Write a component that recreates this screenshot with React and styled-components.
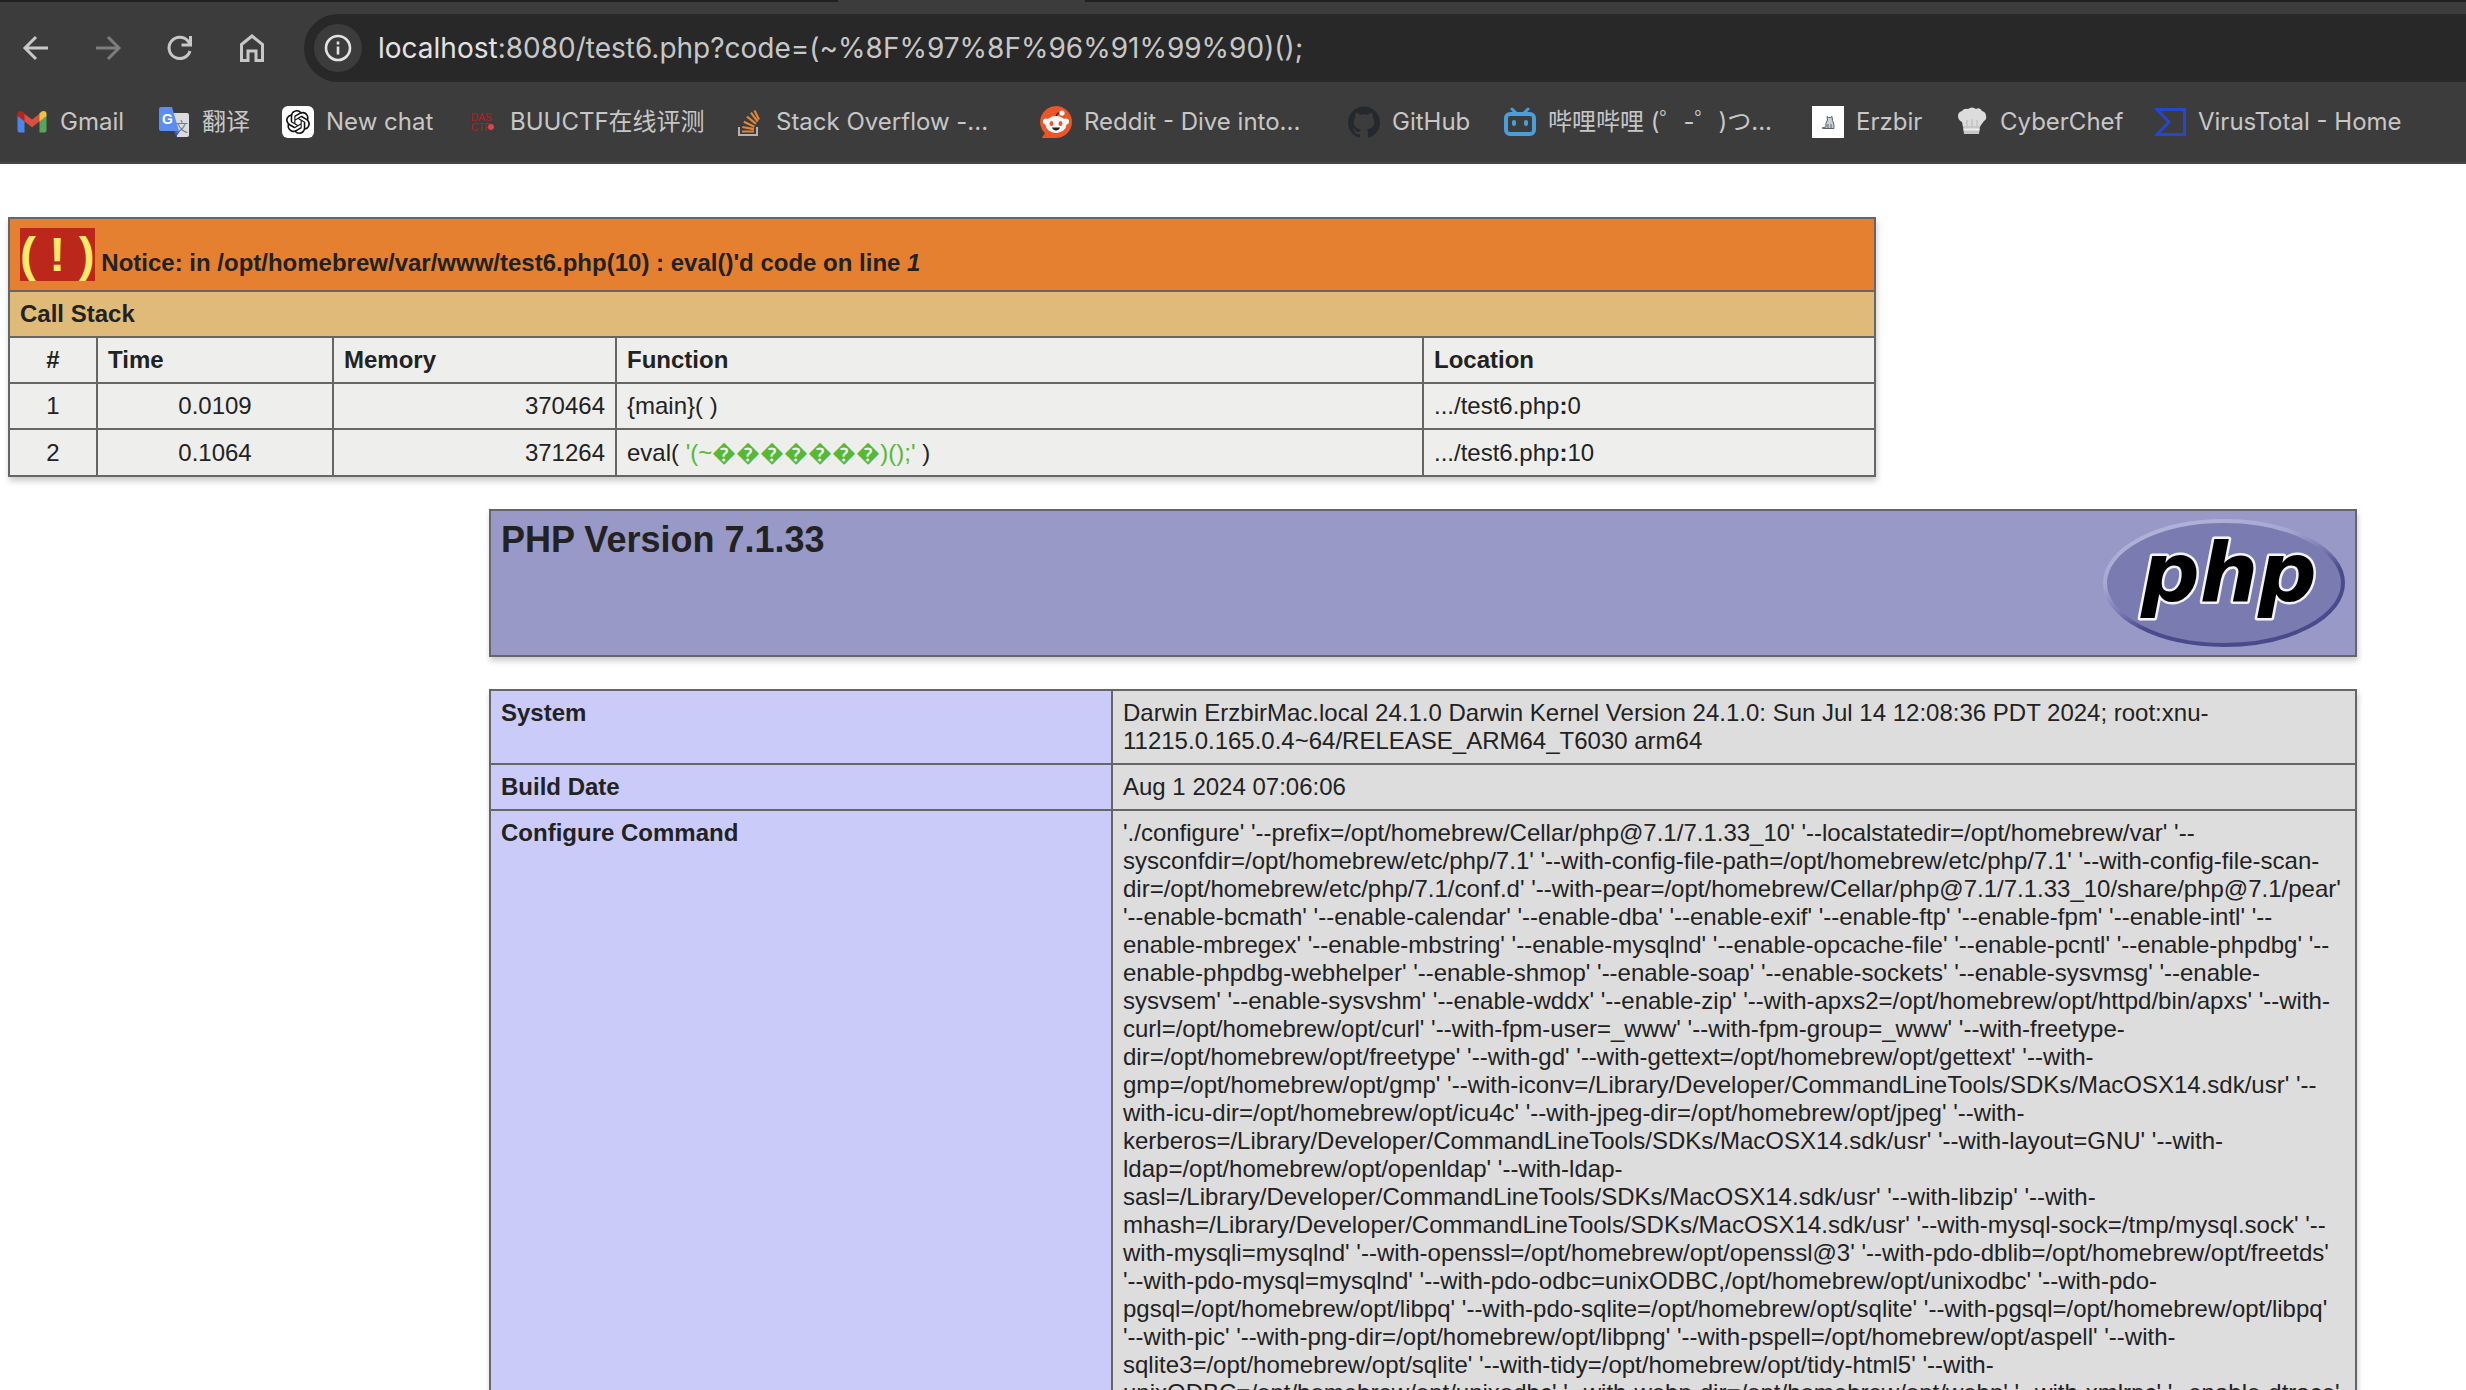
import React from 'react';
import styled, { createGlobalStyle } from 'styled-components';
import { SiOpenai, SiGithub } from 'react-icons/si';

const bookmarks = [
  { name: 'Gmail', icon: 'gmail', width: 64 },
  { name: '翻译', icon: 'translate', width: 46 },
  { name: 'New chat', icon: 'openai', width: 106 },
  { name: 'BUUCTF在线评测', icon: 'das', width: 188 },
  { name: 'Stack Overflow -...', icon: 'stack', width: 230 },
  { name: 'Reddit - Dive into...', icon: 'reddit', width: 230 },
  { name: 'GitHub', icon: 'github', width: 78 },
  { name: '哔哩哔哩 (゜-゜)つ...', icon: 'bilibili', width: 230 },
  { name: 'Erzbir', icon: 'erzbir', width: 66 },
  { name: 'CyberChef', icon: 'chef', width: 120 },
  { name: 'VirusTotal - Home', icon: 'virustotal', width: 200 },
];

const calls = [
  { id: 1, time: '0.0109', memory: '370464', line: 0 },
  { id: 2, time: '0.1064', memory: '371264', code: "'(~\uFFFD\uFFFD\uFFFD\uFFFD\uFFFD\uFFFD\uFFFD)();'", line: 10 },
];

const configure = `'./configure' '--prefix=/opt/homebrew/Cellar/php@7.1/7.1.33_10' '--localstatedir=/opt/homebrew/var' '--
sysconfdir=/opt/homebrew/etc/php/7.1' '--with-config-file-path=/opt/homebrew/etc/php/7.1' '--with-config-file-scan-
dir=/opt/homebrew/etc/php/7.1/conf.d' '--with-pear=/opt/homebrew/Cellar/php@7.1/7.1.33_10/share/php@7.1/pear'
'--enable-bcmath' '--enable-calendar' '--enable-dba' '--enable-exif' '--enable-ftp' '--enable-fpm' '--enable-intl' '--
enable-mbregex' '--enable-mbstring' '--enable-mysqlnd' '--enable-opcache-file' '--enable-pcntl' '--enable-phpdbg' '--
enable-phpdbg-webhelper' '--enable-shmop' '--enable-soap' '--enable-sockets' '--enable-sysvmsg' '--enable-
sysvsem' '--enable-sysvshm' '--enable-wddx' '--enable-zip' '--with-apxs2=/opt/homebrew/opt/httpd/bin/apxs' '--with-
curl=/opt/homebrew/opt/curl' '--with-fpm-user=_www' '--with-fpm-group=_www' '--with-freetype-
dir=/opt/homebrew/opt/freetype' '--with-gd' '--with-gettext=/opt/homebrew/opt/gettext' '--with-
gmp=/opt/homebrew/opt/gmp' '--with-iconv=/Library/Developer/CommandLineTools/SDKs/MacOSX14.sdk/usr' '--
with-icu-dir=/opt/homebrew/opt/icu4c' '--with-jpeg-dir=/opt/homebrew/opt/jpeg' '--with-
kerberos=/Library/Developer/CommandLineTools/SDKs/MacOSX14.sdk/usr' '--with-layout=GNU' '--with-
ldap=/opt/homebrew/opt/openldap' '--with-ldap-
sasl=/Library/Developer/CommandLineTools/SDKs/MacOSX14.sdk/usr' '--with-libzip' '--with-
mhash=/Library/Developer/CommandLineTools/SDKs/MacOSX14.sdk/usr' '--with-mysql-sock=/tmp/mysql.sock' '--
with-mysqli=mysqlnd' '--with-openssl=/opt/homebrew/opt/openssl@3' '--with-pdo-dblib=/opt/homebrew/opt/freetds'
'--with-pdo-mysql=mysqlnd' '--with-pdo-odbc=unixODBC,/opt/homebrew/opt/unixodbc' '--with-pdo-
pgsql=/opt/homebrew/opt/libpq' '--with-pdo-sqlite=/opt/homebrew/opt/sqlite' '--with-pgsql=/opt/homebrew/opt/libpq'
'--with-pic' '--with-png-dir=/opt/homebrew/opt/libpng' '--with-pspell=/opt/homebrew/opt/aspell' '--with-
sqlite3=/opt/homebrew/opt/sqlite' '--with-tidy=/opt/homebrew/opt/tidy-html5' '--with-
unixODBC=/opt/homebrew/opt/unixodbc' '--with-webp-dir=/opt/homebrew/opt/webp' '--with-xmlrpc' '--enable-dtrace'`;

const info = [
  {
    name: 'System',
    value:
      'Darwin ErzbirMac.local 24.1.0 Darwin Kernel Version 24.1.0: Sun Jul 14 12:08:36 PDT 2024; root:xnu-\n11215.0.165.0.4~64/RELEASE_ARM64_T6030 arm64',
  },
  { name: 'Build Date', value: 'Aug 1 2024 07:06:06' },
  { name: 'Configure Command', value: configure },
];

const BookmarkIcon = ({ icon }) => {
  switch (icon) {
    case 'gmail':
      return (
        <svg width="32" height="32" viewBox="0 0 32 32">
          <path d="M1.500 9v15q0 2.500 2 2.500h5V14z" fill="#4e85ec" />
          <path d="M30.500 9v15q0 2.500-2 2.500h-5V14z" fill="#58a55c" />
          <path d="M8 7.500l8 6 8-6V15l-8 6.200L8 15z" fill="#d85140" />
          <path d="M1.500 10V8q0-3 3-3 1.500 0 2.500 1l1.500 1.500V15.500z" fill="#b3261e" />
          <path d="M30.500 10V8q0-3-3-3-1.500 0-2.500 1l-1.500 1.500V15.500z" fill="#f1bf42" />
        </svg>
      );
    case 'translate':
      return (
        <svg width="32" height="32" viewBox="0 0 32 32">
          <path d="M13 7h16q2 0 2 2v20q0 2-2 2H19z" fill="#dcdcdc" />
          <path d="M16 25h6l-4 6z" fill="#3b51c2" />
          <IconText x="17" y="25" fontSize="13" fill="#6b7f86">
            文
          </IconText>
          <path d="M3 1h11l7 24H3q-2 0-2-2V3q0-2 2-2z" fill="#5c8df0" />
          <IconText x="4" y="18" fontSize="14" fontWeight="700" fill="#fff">
            G
          </IconText>
        </svg>
      );
    case 'openai':
      return (
        <IconTile $round>
          <SiOpenai size={24} color="#111" />
        </IconTile>
      );
    case 'das':
      return (
        <svg width="32" height="32" viewBox="0 0 32 32" fill="#b02226">
          <IconText x="5" y="15" fontSize="10">
            DAS
          </IconText>
          <IconText x="5" y="25" fontSize="10">
            CTF
          </IconText>
          <circle cx="25" cy="21" r="3" fill="#d9474b" />
        </svg>
      );
    case 'stack':
      return (
        <svg width="32" height="32" viewBox="0 0 32 32" fill="none">
          <path d="M7 21v8h18v-8" stroke="#b0b2b5" strokeWidth="2" />
          <path
            d="M10 25.500h12M10.300 21l11.700 2.200M11.800 15.800l10.600 4.900M15 10.600l9 7.200M19 6.600l6.700 9M22.500 4.500l4.500 9"
            stroke="#e0853a"
            strokeWidth="2.200"
          />
        </svg>
      );
    case 'reddit':
      return (
        <svg width="32" height="32" viewBox="0 0 32 32">
          <path d="M16 0a16 16 0 1 1 0 32H2.500q-1 0-.3-.8L5 27.500A16 16 0 0 1 16 0z" fill="#eb5528" />
          <path d="M16 11q1-5 5-4" fill="none" stroke="#222" strokeWidth="1.200" />
          <circle cx="22" cy="7" r="2.600" fill="#fff" />
          <circle cx="6" cy="15.500" r="3" fill="#fff" />
          <circle cx="26" cy="15.500" r="3" fill="#fff" />
          <ellipse cx="16" cy="18.500" rx="10.500" ry="8.500" fill="#f4f6f7" />
          <ellipse cx="11.500" cy="17.500" rx="1.900" ry="2.600" fill="#eb5528" />
          <ellipse cx="20.500" cy="17.500" rx="1.900" ry="2.600" fill="#eb5528" />
          <path d="M12 21.500h8q-1 3-4 3t-4-3z" fill="#222" />
        </svg>
      );
    case 'github':
      return <SiGithub size={32} color="#25292e" />;
    case 'bilibili':
      return (
        <svg width="32" height="32" viewBox="0 0 32 32" fill="none" stroke="#4a9fd8" strokeWidth="4" strokeLinecap="round">
          <rect x="2" y="8" width="28" height="20" rx="4" />
          <path d="M8 3l4 4M24 3l-4 4" strokeWidth="3" />
          <path d="M10 16v2M22 16v2" />
        </svg>
      );
    case 'erzbir':
      return (
        <IconTile>
          <svg width="32" height="32" viewBox="0 0 32 32">
            <path
              d="M15 10.500l1.500 1h2l1.500-1 .5 4q2 3 1.500 8H12l-2-.5 4-1q-1-4 1.500-7z"
              fill="#c9ced2"
              stroke="#59626a"
              strokeWidth="1"
            />
            <path d="M16 18v4M19 18v4" stroke="#59626a" />
          </svg>
        </IconTile>
      );
    case 'chef':
      return (
        <svg width="32" height="32" viewBox="0 0 32 32">
          <path
            d="M7 21l-1-5q-4-2-4-6 0-4 4-5 2-3 6-2 4-3 8 0 4-2 6 2 4 1 4 5 1 3-2 5l-3 4-1 2z"
            fill="#dcdcdc"
          />
          <path d="M7 20l1 8h15l1-8z" fill="#c8c8c8" />
          <path d="M11 14v8M16 13v9M21 14v8" stroke="#c2c2c2" strokeWidth="1.500" />
          <path d="M7.500 23.500h16" stroke="#eee" strokeWidth="2" />
        </svg>
      );
    default:
      return (
        <svg width="32" height="32" viewBox="0 0 32 32">
          <path d="M3 3.500h27.500v25H3L15 16z" fill="none" stroke="#2148cf" strokeWidth="3" />
        </svg>
      );
  }
};

const PhpLogo = () => (
  <svg width="242" height="128" viewBox="0 0 242 128" role="img" aria-label="PHP logo">
    <defs>
      <linearGradient id="rim" x1="0.2" y1="0" x2="0.8" y2="1">
        <stop offset="0" stopColor="#b3b4da" />
        <stop offset="0.3" stopColor="#a7a8d2" />
        <stop offset="0.48" stopColor="#7a7bb2" />
        <stop offset="0.62" stopColor="#4a4b8c" />
        <stop offset="1" stopColor="#484a8b" />
      </linearGradient>
    </defs>
    <ellipse cx="121" cy="64" rx="119" ry="62" fill="#797bb1" stroke="url(#rim)" strokeWidth="4" />
    <LogoText x="38" y="82">
      php
    </LogoText>
  </svg>
);

const App = () => {
  return (
    <Browser>
      <GlobalStyle />
      <TabStrip>
        <ActiveTab />
      </TabStrip>
      <Toolbar>
        <NavButton type="button" aria-label="Back">
          <svg width="28" height="28" viewBox="0 0 28 28">
            <path d="M26 14H4M14 3L3 14l11 11" />
          </svg>
        </NavButton>
        <NavButton type="button" aria-label="Forward" disabled>
          <svg width="28" height="28" viewBox="0 0 28 28">
            <path d="M2 14h22M14 3l11 11-11 11" />
          </svg>
        </NavButton>
        <NavButton type="button" aria-label="Reload">
          <svg width="28" height="28" viewBox="0 0 28 28">
            <path d="M24 17A10.700 10.700 0 1 1 22 7l2 3M24.500 2v9H15.500" />
          </svg>
        </NavButton>
        <NavButton type="button" aria-label="Home">
          <svg width="28" height="28" viewBox="0 0 28 28">
            <path d="M3.500 10.500L14 2l10.500 8.500V26.500H18V17h-8v9.500H3.500z" />
          </svg>
        </NavButton>
        <AddressBar>
          <SiteInfo type="button" aria-label="Site information">
            <svg width="28" height="28" viewBox="0 0 28 28" fill="none" stroke="#e3e3e3">
              <circle cx="14" cy="14" r="12" strokeWidth="2.600" />
              <path d="M14 12.500v8M14 7.500v3" strokeWidth="2.600" />
            </svg>
          </SiteInfo>
          <Url href="#top">
            <b>localhost</b>:8080/test6.php?code=(~%8F%97%8F%96%91%99%90)();
          </Url>
        </AddressBar>
      </Toolbar>
      <Bookmarks>
        {bookmarks.map((mark) => {
          return (
            <Bookmark href="#top" key={mark.name}>
              <BookmarkIcon icon={mark.icon} />
              <BookmarkLabel $width={mark.width}>{mark.name}</BookmarkLabel>
            </Bookmark>
          );
        })}
      </Bookmarks>
      <Page>
        <Table>
          <colgroup>
            <Col $width="88px" />
            <Col $width="236px" />
            <Col $width="283px" />
            <Col $width="807px" />
            <Col />
          </colgroup>
          <tbody>
            <tr>
              <NoticeCell colSpan="5">
                <Bang>( ! )</Bang> Notice: in /opt/homebrew/var/www/test6.php(10) : eval()'d code on line <i>1</i>
              </NoticeCell>
            </tr>
            <tr>
              <StackCell colSpan="5">Call Stack</StackCell>
            </tr>
            <tr>
              <CallHead $align="center">#</CallHead>
              <CallHead>Time</CallHead>
              <CallHead>Memory</CallHead>
              <CallHead>Function</CallHead>
              <CallHead>Location</CallHead>
            </tr>
            {calls.map((call) => {
              return (
                <tr key={call.id}>
                  <CallCell $align="center">{call.id}</CallCell>
                  <CallCell $align="center">{call.time}</CallCell>
                  <CallCell $align="right">{call.memory}</CallCell>
                  <CallCell>
                    {call.code ? (
                      <>
                        eval( <Code>{call.code}</Code> )
                      </>
                    ) : (
                      '{main}( )'
                    )}
                  </CallCell>
                  <CallCell>
                    .../test6.php<b>:</b>
                    {call.line}
                  </CallCell>
                </tr>
              );
            })}
          </tbody>
        </Table>
        <Center>
          <Version>
            <h1>PHP Version 7.1.33</h1>
            <PhpLogo />
          </Version>
          <InfoTable>
            <tbody>
              {info.map((row) => {
                return (
                  <tr key={row.name}>
                    <InfoName scope="row">{row.name}</InfoName>
                    <InfoValue>{row.value}</InfoValue>
                  </tr>
                );
              })}
            </tbody>
          </InfoTable>
        </Center>
      </Page>
    </Browser>
  );
};

const GlobalStyle = createGlobalStyle`
  body {
    margin: 0;
    background: #fff;
  }
`;

const Browser = styled.div`
  display: flex;
  flex-direction: column;
  height: 100vh;
  overflow: hidden;
`;

const TabStrip = styled.div`
  flex: none;
  height: 2px;
  background: #202020;
`;

const ActiveTab = styled.div`
  width: 10%;
  height: 100%;
  margin-left: 34%;
  background: #3c3c3c;
`;

const Toolbar = styled.div`
  flex: none;
  display: flex;
  align-items: center;
  height: 92px;
  background: #3c3c3c;
`;

const NavButton = styled.button`
  display: flex;
  justify-content: center;
  width: 72px;
  padding: 0;
  border: none;
  background: none;

  svg {
    fill: none;
    stroke: ${(props) => (props.disabled ? '#7d7d7d' : '#c7c7c7')};
    stroke-width: 3;
  }
`;

const AddressBar = styled.div`
  flex: 1;
  display: flex;
  align-items: center;
  gap: 16px;
  height: 68px;
  margin-left: 16px;
  padding-left: 10px;
  border-radius: 34px 0 0 34px;
  background: #282828;
`;

const SiteInfo = styled.button`
  display: flex;
  align-items: center;
  justify-content: center;
  width: 48px;
  height: 48px;
  padding: 0;
  border: none;
  border-radius: 50%;
  background: #3c3c3c;
`;

const Url = styled.a`
  color: #c7c7c7;
  font-family: Inter, sans-serif;
  font-size: 28px;
  text-decoration: none;

  b {
    color: #e3e3e3;
    font-weight: 400;
  }
`;

const Bookmarks = styled.nav`
  flex: none;
  display: flex;
  gap: 34px;
  height: 56px;
  padding: 12px 16px 0;
  border-bottom: 2px solid #474747;
  background: #3c3c3c;
`;

const Bookmark = styled.a`
  flex: none;
  display: flex;
  align-items: center;
  gap: 12px;
  height: 32px;
  color: #c7c7c7;
  font-family: Inter, 'Noto Sans CJK SC', sans-serif;
  font-size: 24px;
  text-decoration: none;
`;

const BookmarkLabel = styled.span`
  width: ${(props) => props.$width}px;
  line-height: 32px;
  white-space: nowrap;
`;

const IconText = styled.text`
  font-family: 'Liberation Sans', 'Noto Sans CJK SC', sans-serif;
`;

const IconTile = styled.span`
  display: flex;
  align-items: center;
  justify-content: center;
  width: 32px;
  height: 32px;
  border-radius: ${(props) => (props.$round ? '6px' : 0)};
  background: #fff;
`;

const Page = styled.main`
  flex: 1;
  overflow: hidden;
  padding: 53px 8px 0;
  background: #fff;
  color: #222;
  font-family: 'Liberation Sans', sans-serif;
  font-size: 24px;
  line-height: 28px;
`;

const Table = styled.table`
  width: 100%;
  max-width: 1868px;
  border-collapse: collapse;
  table-layout: fixed;
  box-shadow: 1px 4px 6px #ccc;
`;

const Col = styled.col`
  width: ${(props) => props.$width || 'auto'};
`;

const NoticeCell = styled.th`
  padding: 8px 10px;
  border: 2px solid #666;
  background: #e58031;
  text-align: left;
`;

const StackCell = styled(NoticeCell)`
  background: #e0ba79;
`;

const CallHead = styled(NoticeCell)`
  background: #eeeeec;
  text-align: ${(props) => props.$align || 'left'};
`;

const CallCell = styled.td`
  padding: 8px 10px;
  border: 2px solid #666;
  background: #eeeeec;
  text-align: ${(props) => props.$align || 'left'};
`;

const Bang = styled.span`
  background: #bb271a;
  color: #fbe96b;
  font-size: 48px;
  line-height: 55px;
`;

const Code = styled.span`
  color: #55b934;
  line-height: 29px;
`;

const Center = styled.div`
  max-width: 1868px;
  margin: 32px 101px 0 auto;
`;

const Version = styled.header`
  display: flex;
  justify-content: space-between;
  align-items: flex-start;
  padding: 8px 10px;
  border: 2px solid #666;
  background: #9999c8;
  box-shadow: 1px 4px 6px #ccc;

  h1 {
    margin: 0;
    font-size: 36px;
    line-height: 41px;
  }
`;

const LogoText = styled.text`
  fill: #000;
  stroke: #f4f4f8;
  stroke-width: 5px;
  stroke-linejoin: round;
  paint-order: stroke;
  font-family: 'DejaVu Sans', sans-serif;
  font-size: 82px;
  font-style: italic;
  font-weight: 700;
`;

const InfoTable = styled(Table)`
  margin-top: 32px;
`;

const InfoName = styled.th`
  width: 600px;
  padding: 8px 10px;
  border: 2px solid #666;
  background: #cbcbf9;
  text-align: left;
  vertical-align: top;
`;

const InfoValue = styled.td`
  padding: 8px 10px;
  border: 2px solid #666;
  background: #ddd;
  vertical-align: top;
  white-space: pre-line;
`;

export default App;
